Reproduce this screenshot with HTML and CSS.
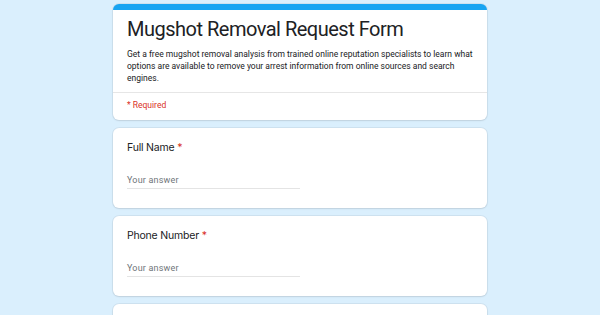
FILE: index.html
```html
<!DOCTYPE html>
<html lang="en">
<head>
    <meta charset="UTF-8">
    <meta name="viewport" content="width=device-width, initial-scale=1.0">
    <title>Mugshot Removal Request Form</title>
    <link rel="stylesheet" href="styles.css">
</head>
<body>
    <div class="form">
        <div class="card header-card">
            <div class="header-main">
                <h1>Mugshot Removal Request Form</h1>
                <p class="desc">Get a free mugshot removal analysis from trained online reputation specialists to learn what options are available to remove your arrest information from online sources and search engines.</p>
            </div>
            <div class="required-note">* Required</div>
        </div>

        <div class="card question">
            <div class="q-label">Full Name <span class="star">*</span></div>
            <div class="answer">Your answer</div>
        </div>

        <div class="card question">
            <div class="q-label">Phone Number <span class="star">*</span></div>
            <div class="answer">Your answer</div>
        </div>

        <!-- next question, below the fold -->
        <div class="card question"></div>
    </div>
</body>
</html>
```

FILE: styles.css
```css
body {
    margin: 0;
    background-color: #daeffd;
    font-family: Roboto, 'Liberation Sans', sans-serif;
    color: #202124;
}
.form {
    width: 374px;
    margin: 0 auto;
    padding-top: 4px;
    display: flex;
    flex-direction: column;
    gap: 8px;
}
.card {
    background: white;
    border-radius: 6px;
    box-shadow: 0 0 0 1px rgba(0,0,0,0.05), 0 1px 2px rgba(0,0,0,0.08);
}
.header-card {
    border-top: 6px solid #17a4f2;
}
.header-main {
    padding: 7px 14px 8px;
    border-bottom: 1px solid #e6e6e6;
}
h1 {
    margin: 0;
    font-size: 20px;
    font-weight: 400;
    line-height: 24px;
    letter-spacing: -0.5px;
    color: #202124;
}
.desc {
    margin: 7px 0 0;
    font-size: 8.5px;
    line-height: 12px;
    color: #202124;
}
.required-note {
    padding: 6px 14px 9px;
    font-size: 8.5px;
    line-height: 12px;
    color: #d93025;
}
.question {
    height: 80px;
    box-sizing: border-box;
    padding: 13px 14px 0;
}
.q-label {
    font-family: Inter, Roboto, sans-serif;
    font-size: 10.5px;
    line-height: 14px;
    letter-spacing: -0.2px;
    color: #202124;
}
.star {
    color: #d93025;
}
.answer {
    margin-top: 19px;
    width: 173px;
    padding-bottom: 2px;
    border-bottom: 1px solid #e4e4e4;
    font-size: 9px;
    line-height: 12px;
    letter-spacing: 0.2px;
    color: #70757a;
}
```
